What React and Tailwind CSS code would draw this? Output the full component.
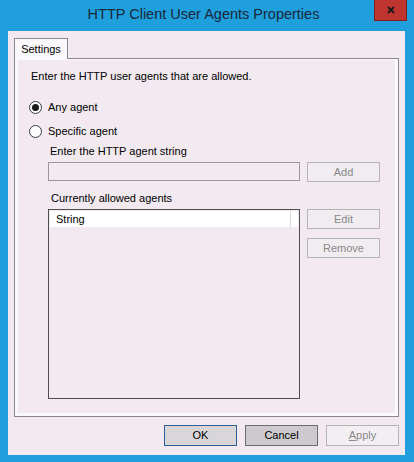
import { X } from "lucide-react";

const font = { fontFamily: '"Liberation Sans", Arial, sans-serif' };

const Btn = ({ children, className = "" }) => (
  <div
    className={`flex h-[20px] w-[73px] items-center justify-center border text-[11px] ${className}`}
  >
    {children}
  </div>
);

const Radio = ({ checked, label }) => (
  <div className="flex h-[13px] items-center">
    <div className="ml-[11px] flex h-[13px] w-[13px] items-center justify-center rounded-full border border-[#3c3c3c] bg-white">
      {checked && <div className="h-[7px] w-[7px] rounded-full bg-[#1a1a1a]" />}
    </div>
    <span className="ml-[6px] text-[11px] text-black">{label}</span>
  </div>
);

export default function App() {
  return (
    <div
      className="flex h-[462px] w-[414px] flex-col bg-[#1f9fdc] pb-[7px] pl-[8px] pr-[9px]"
      style={font}
    >
      {/* title bar */}
      <div className="relative flex h-[31px] shrink-0 items-center justify-center">
        <span className="ml-[-6px] pb-[1px] text-[14.5px] text-[#17283b]">
          HTTP Client User Agents Properties
        </span>
        <div className="absolute right-[-2px] top-0 flex h-[21px] w-[33px] items-center justify-center border border-t-0 border-[#7a1f1c] bg-[#c13530]">
          <X className="h-[10px] w-[10px] text-[#1a1a1a]" strokeWidth={4.5} />
        </div>
      </div>

      {/* client */}
      <div className="flex flex-1 flex-col bg-[#f2eaf0] px-[6px] pt-[7px]">
        {/* tab strip */}
        <div className="flex">
          <div className="relative z-10 -mb-px flex h-[21px] w-[54px] items-center justify-center border border-b-0 border-[#8a8a8a] bg-[#fbf9fb] text-[11px] text-black">
            Settings
          </div>
        </div>

        {/* tab panel */}
        <div className="flex h-[359px] flex-col border border-[#8a8a8a] bg-[#fbf9fb] px-[3px] pb-[3px] pt-[1px]">
          <div className="flex flex-1 flex-col bg-[#f2eaf0]">
            <div className="ml-[13px] mt-[10px] h-[13px] text-[11px] leading-[13px] text-black">
              Enter the HTTP user agents that are allowed.
            </div>
            <div className="mt-[18px]">
              <Radio checked label="Any agent" />
            </div>
            <div className="mt-[11px]">
              <Radio label="Specific agent" />
            </div>
            <div className="ml-[32px] mt-[7px] h-[13px] text-[11px] leading-[13px] text-black">
              Enter the HTTP agent string
            </div>
            <div className="ml-[30px] mt-[4px] flex gap-[7px]">
              <div className="h-[19px] w-[252px] border border-[#9a9a9a] bg-[#f2eaf0]" />
              <Btn className="border-[#b4b4b4] bg-[#f0ecf0] text-[#8a8a8a]">Add</Btn>
            </div>
            <div className="ml-[33px] mt-[10px] h-[13px] text-[11px] leading-[13px] text-black">
              Currently allowed agents
            </div>
            <div className="ml-[30px] mt-[4px] flex gap-[7px]">
              <div className="h-[190px] w-[252px] border border-[#4e4e4e] bg-[#f2eaf0] p-px">
                <div className="flex h-[16px] bg-white">
                  <div className="flex w-[241px] items-center border-r border-[#d6d6d6] pl-[6px] text-[11px] text-black">
                    String
                  </div>
                </div>
              </div>
              <div className="flex flex-col gap-[9px]">
                <Btn className="border-[#b4b4b4] bg-[#f0ecf0] text-[#8a8a8a]">Edit</Btn>
                <Btn className="border-[#b4b4b4] bg-[#f0ecf0] text-[#8a8a8a]">Remove</Btn>
              </div>
            </div>
          </div>
        </div>

        {/* bottom buttons */}
        <div className="mt-[8px] flex justify-end gap-[8px]">
          <Btn className="h-[21px] border-[#2f5f9a] bg-[#d8d6d8] text-black">OK</Btn>
          <Btn className="h-[21px] w-[72px] border-[#6d6d6d] bg-[#cccacc] text-black">Cancel</Btn>
          <Btn className="h-[21px] border-[#b4b4b4] bg-[#f2eef2] text-[#8a8a8a]">
            <span>
              <span className="underline">A</span>pply
            </span>
          </Btn>
        </div>
      </div>
    </div>
  );
}
